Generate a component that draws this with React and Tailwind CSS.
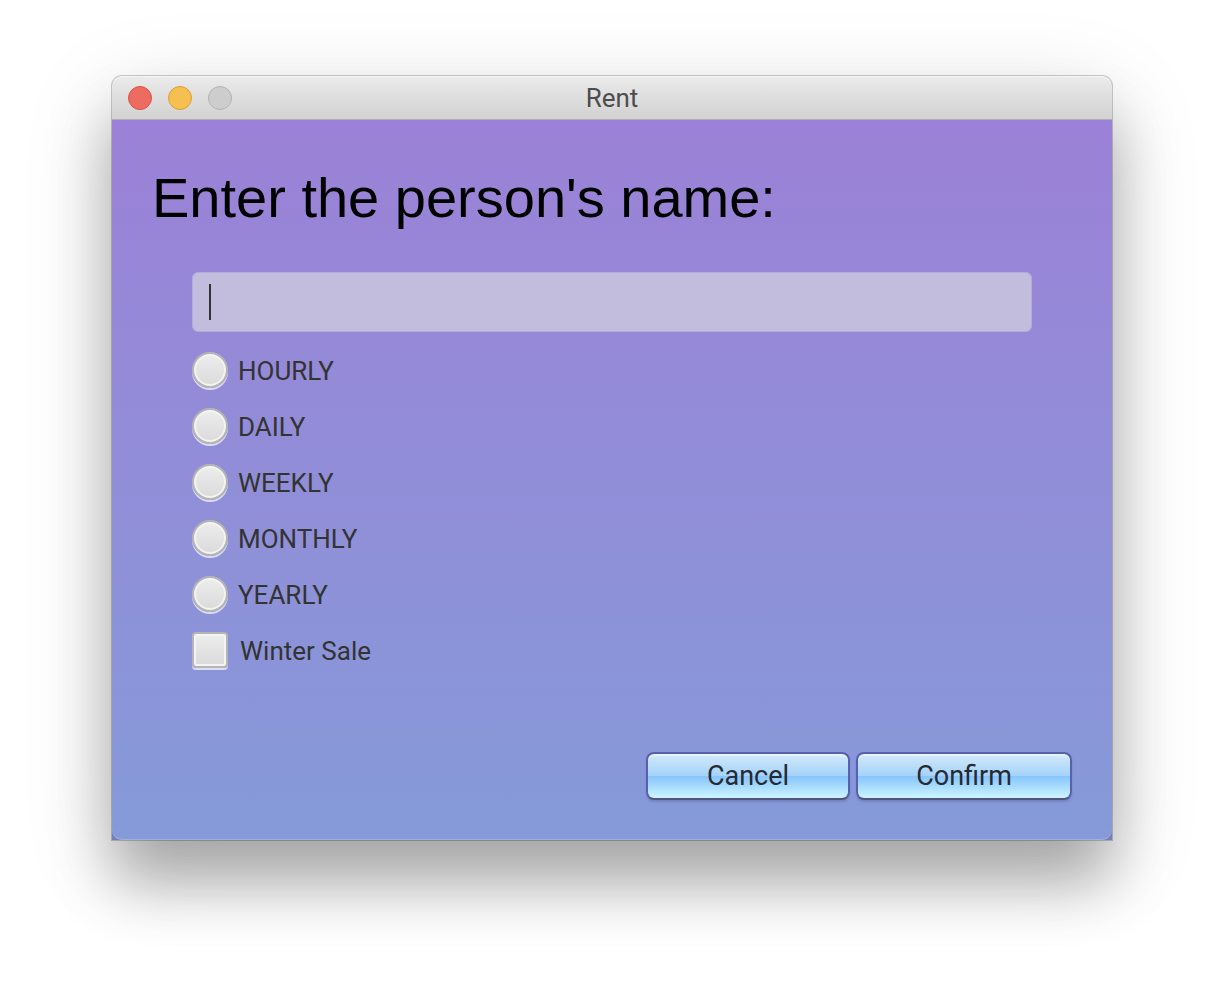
import { useState } from "react";

const PERIODS = ["HOURLY", "DAILY", "WEEKLY", "MONTHLY", "YEARLY"];

const toggleStyle =
  "size-9 shrink-0 appearance-none border-2 border-[#b5b5b5] bg-linear-to-b from-[#ededed] to-[#dadada] shadow-[0_2px_0_#dcdcf3,inset_0_0_0_2px_#f4f4f4] checked:to-[#8fc4ee]";

function ActionButton({ children, className }) {
  return (
    <button
      type="button"
      className={`h-12 rounded-lg border-2 border-[#5b60ae] border-b-[#50547c] bg-[linear-gradient(to_bottom,#d3e9fb_0%,#a4d3fa_50%,#88c5fc_51%,#ccf5ff_100%)] text-[27px] leading-11 text-[#262a33] shadow-[0_2px_2px_rgba(80,90,160,0.35),inset_0_2px_0_rgba(235,250,255,0.7)] ${className}`}
    >
      {children}
    </button>
  );
}

export default function App() {
  const [name, setName] = useState("");
  const [period, setPeriod] = useState("");

  return (
    <main className="min-h-screen bg-white px-28 pt-19 pb-37 font-[Roboto,sans-serif]">
      <section className="rounded-t-[10px] bg-[#7580bb] shadow-[0_0_0_1px_rgba(0,0,0,0.2),0_44px_60px_rgba(0,0,0,0.27),0_22px_90px_rgba(0,0,0,0.15)]">
        <header className="grid h-11 grid-cols-[1fr_auto_1fr] items-center rounded-t-[10px] border-b border-[#b0b0b0] bg-linear-to-b from-[#ebebeb] to-[#d2d2d2] px-4 pt-px shadow-[inset_0_1px_0_#f7f7f7]">
          <div className="flex gap-4">
            <button type="button" aria-label="Close" className="size-6 rounded-full border border-[#d5544b] bg-[#ed6b60]" />
            <button type="button" aria-label="Minimize" className="size-6 rounded-full border border-[#d9a03c] bg-[#f5c04f]" />
            <button type="button" aria-label="Zoom" disabled className="size-6 rounded-full border border-[#b3b3b3] bg-[#cdcdcd]" />
          </div>
          <h1 className="text-[26px] leading-9 text-[#4d4d4d]">Rent</h1>
        </header>

        <form className="rounded-b-[10px] bg-linear-to-b from-[#9b81d7] to-[#859ad9] px-10 pt-10 pb-10 shadow-[inset_0_-1px_0_#a3aee0]">
          <label
            htmlFor="person"
            className="block font-['Liberation_Sans',sans-serif] text-[56px] leading-[76px] text-black"
          >
            Enter the person's name:
          </label>

          <div className="px-10 pt-9">
            <div className="relative">
              <input
                id="person"
                type="text"
                value={name}
                onChange={(e) => setName(e.target.value)}
                className="peer block h-15 w-full rounded-md border border-[#b4aadc] bg-[#c3bddd] px-4 text-[26px] text-[#333] outline-none"
              />
              {name === "" && (
                <span className="pointer-events-none absolute top-3 left-[17px] h-9 w-0.5 bg-[#333] peer-focus:hidden" />
              )}
            </div>

            <fieldset className="flex flex-col items-start gap-5 pt-5">
              {PERIODS.map((p) => (
                <label key={p} className="flex h-9 items-start gap-2.5 text-[26px] leading-[38px] text-[#333]">
                  <input
                    type="radio"
                    name="period"
                    value={p}
                    checked={period === p}
                    onChange={() => setPeriod(p)}
                    className={`${toggleStyle} rounded-full`}
                  />
                  {p}
                </label>
              ))}
              <label className="flex h-9 items-start gap-3 text-[26px] leading-[38px] text-[#333]">
                <input type="checkbox" className={`${toggleStyle} rounded-sm`} />
                Winter Sale
              </label>
            </fieldset>
          </div>

          <div className="flex justify-end gap-1.5 pt-21">
            <ActionButton className="w-51">Cancel</ActionButton>
            <ActionButton className="w-54">Confirm</ActionButton>
          </div>
        </form>
      </section>
    </main>
  );
}
